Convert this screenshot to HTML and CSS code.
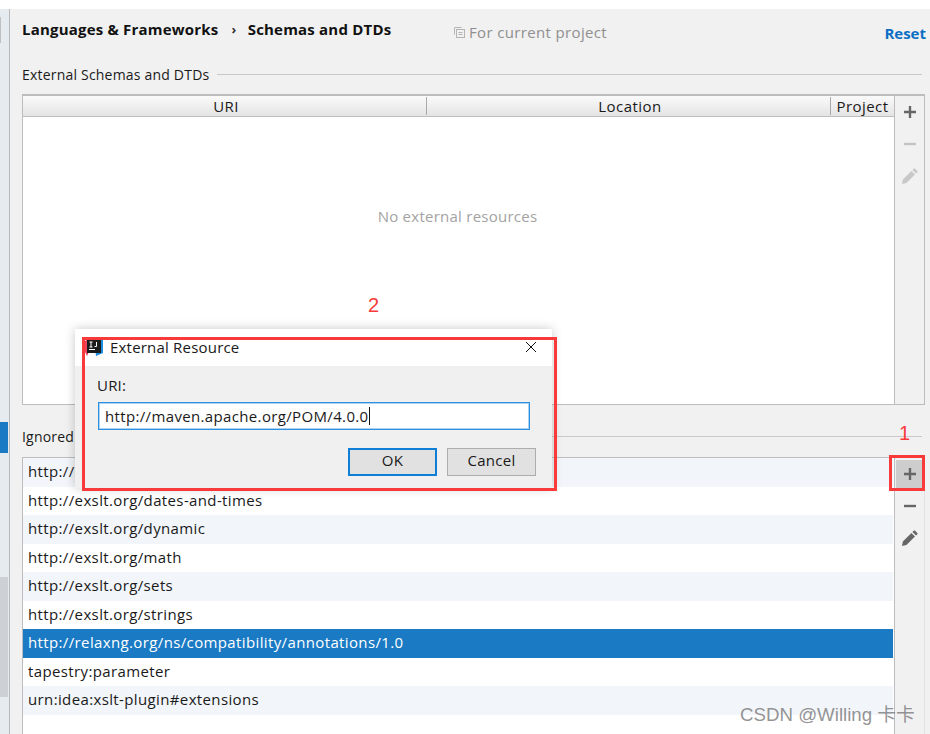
FILE: index.html
```html
<!DOCTYPE html>
<html>
<head>
<meta charset="UTF-8">
<title>Schemas and DTDs</title>
<link rel="stylesheet" href="styles.css">
</head>
<body>
<div class="page">
<div class="sidebar">
<div class="side-tab"></div>
<div class="side-selected"></div>
<div class="side-scroll"></div>
</div>
<div class="main">
<div class="header">
<span class="crumb">Languages &amp; Frameworks</span>
<span class="crumb-sep">›</span>
<span class="crumb">Schemas and DTDs</span>
<span class="scope">
<svg width="12" height="12" viewBox="0 0 12 12" fill="none" stroke="#b5b5b5"><path d="M1.5 8.5v-7h7"/><rect x="3.5" y="3.5" width="8" height="8"/><path d="M5.5 6.5h4M5.5 8.5h4"/></svg>
For current project
</span>
<a class="reset">Reset</a>
</div>
<div class="section-title"><span>External Schemas and DTDs</span><i></i></div>
<div class="panel panel-top">
<div class="table">
<div class="thead">
<div class="th th-uri">URI</div>
<div class="th th-loc">Location</div>
<div class="th th-proj">Project</div>
</div>
<div class="empty">No external resources</div>
</div>
<div class="tools">
<button class="tool"><svg width="16" height="16" viewBox="0 0 16 16"><path d="M8 2v12M2 8h12" stroke="#666" stroke-width="2.4"/></svg></button>
<button class="tool"><svg width="16" height="16" viewBox="0 0 16 16"><path d="M2 8h12" stroke="#c4c4c4" stroke-width="2.4"/></svg></button>
<button class="tool"><svg width="18" height="18" viewBox="0 0 18 18" fill="#c8c8c8"><path d="M1 17l.9-4.4L10.4 4l3.6 3.6-8.6 8.5z"/><path d="M11.4 3l1.3-1.3a1 1 0 011.4 0l2.2 2.2a1 1 0 010 1.4L15 6.6z"/></svg></button>
</div>
</div>
<div class="section-title section-ignored"><span>Ignored</span><i></i></div>
<div class="panel panel-bottom">
<div class="list">
<div class="row alt">http://exslt.org/common</div>
<div class="row">http://exslt.org/dates-and-times</div>
<div class="row alt">http://exslt.org/dynamic</div>
<div class="row">http://exslt.org/math</div>
<div class="row alt">http://exslt.org/sets</div>
<div class="row">http://exslt.org/strings</div>
<div class="row selected">http://relaxng.org/ns/compatibility/annotations/1.0</div>
<div class="row">tapestry:parameter</div>
<div class="row alt">urn:idea:xslt-plugin#extensions</div>
</div>
<div class="tools tools-low">
<button class="tool hover"><svg width="16" height="16" viewBox="0 0 16 16"><path d="M8 2v12M2 8h12" stroke="#666" stroke-width="2.4"/></svg></button>
<button class="tool"><svg width="16" height="16" viewBox="0 0 16 16"><path d="M2 8h12" stroke="#666" stroke-width="2.4"/></svg></button>
<button class="tool"><svg width="18" height="18" viewBox="0 0 18 18" fill="#666"><path d="M1 17l.9-4.4L10.4 4l3.6 3.6-8.6 8.5z"/><path d="M11.4 3l1.3-1.3a1 1 0 011.4 0l2.2 2.2a1 1 0 010 1.4L15 6.6z"/></svg></button>
</div>
</div>
</div>

<div class="dialog">
<div class="dialog-title">
<svg class="logo" width="18" height="18" viewBox="0 0 18 18"><path d="M0 3l5-3 4 2-7 16-2-4z" fill="#f0405f"/><path d="M9 0l9 2v13l-7 3z" fill="#1a8fe0"/><rect x="2" y="1" width="14" height="14" fill="#1c1c1c"/><rect x="4" y="11" width="6" height="1" fill="#fff"/><path d="M4.5 4h3M6 4v5M4.5 9h3M11.5 4v4.5h-2" stroke="#fff" fill="none"/></svg>
<span>External Resource</span>
<svg class="close" width="12" height="12" viewBox="0 0 12 12"><path d="M1 1l10 10M11 1L1 11" stroke="#111" stroke-width="1"/></svg>
</div>
<div class="dialog-body">
<label class="uri-label">URI:</label>
<div class="uri-input"><span>http://maven.apache.org/POM/4.0.0</span><i></i></div>
<div class="dialog-buttons">
<button class="btn btn-ok">OK</button>
<button class="btn">Cancel</button>
</div>
</div>
</div>

<div class="mark mark-dialog"></div>
<div class="mark mark-plus"></div>
<div class="note note-1">1</div>
<div class="note note-2">2</div>
<div class="watermark">CSDN @Willing 卡卡</div>
</div>
</body>
</html>
```
FILE: styles.css
```css
body{margin:0;background:#fff;font-family:"Open Sans","Noto Sans",sans-serif;font-size:15px;letter-spacing:.45px;color:#1a1a1a;}
.page{position:relative;display:flex;width:930px;height:734px;padding-top:9px;box-sizing:border-box;overflow:hidden;}
.sidebar{position:relative;width:9px;background:#e6ebf0;border-right:1px solid #b9b9b9;flex-shrink:0;}
.side-tab{position:absolute;left:0;top:8px;width:1px;height:26px;background:#c0c0c0;}
.side-selected{position:absolute;left:0;top:413px;width:8px;height:31px;background:#1a7ac4;}
.side-scroll{position:absolute;left:0;top:568px;width:8px;height:120px;background:#cdd1d6;}
.main{flex:1;background:#f1f1f1;padding:0 5px 0 12px;min-width:0;}

.header{display:flex;align-items:center;height:42px;position:relative;margin-top:-1px;}
.crumb{font-weight:700;letter-spacing:.2px;color:#111;}
.crumb-sep{margin:0 11px 0 13px;font-size:13px;font-weight:700;color:#333;}
.scope{position:absolute;left:431px;top:14px;display:flex;align-items:center;gap:4px;color:#8f8f8f;letter-spacing:.35px;}
.reset{position:absolute;right:-1px;top:15px;color:#0b6fc4;font-weight:700;letter-spacing:0;}

.section-title{display:flex;align-items:center;gap:8px;height:28px;margin-top:10px;font-size:14px;letter-spacing:.2px;}
.section-title span{white-space:nowrap;}
.section-title i{flex:1;height:1px;background:#c9c9c9;margin-right:3px;}
.section-ignored{height:24px;margin-top:19px;margin-bottom:9px;}

.panel{display:flex;}
.panel-top{height:311px;margin-top:6px;box-sizing:border-box;border:1px solid #bdbdbd;border-top-width:2px;}
.panel-bottom{height:277px;}
.table{flex:1;border-right:1px solid #bdbdbd;background:#fff;display:flex;flex-direction:column;}
.thead{display:flex;height:20px;background:linear-gradient(#fafafa,#e4e4e4);border-bottom:1px solid #bdbdbd;flex-shrink:0;}
.th{display:flex;align-items:center;justify-content:center;border-right:1px solid #a9a9a9;margin:1px 0;padding-left:3px;box-sizing:border-box;}
.th-uri{width:404px;}
.th-loc{width:404px;}
.th-proj{flex:1;border-right:0;padding-left:0;}
.empty{flex:1;display:flex;align-items:center;justify-content:center;color:#a3a3a3;letter-spacing:.25px;padding-right:2px;padding-bottom:89px;}

.tools{width:29px;display:flex;flex-direction:column;padding:2px 0 0 1px;gap:4px;flex-shrink:0;box-sizing:border-box;}
.tools-low{width:31px;padding-top:3px;border-left:1px solid #bdbdbd;border-right:1px solid #e2e2e2;}
.tool{width:27px;height:28px;margin:0;padding:0;border:0;background:none;display:flex;align-items:center;justify-content:center;}
.tool.hover{background:#cdcdcd;}

.list{flex:1;border-left:1px solid #bdbdbd;border-top:1px solid #bdbdbd;background:#fff;padding-right:1px;}
.row{height:28.5px;line-height:27.5px;padding-left:5px;background:#fff;white-space:nowrap;letter-spacing:.37px;}
.row.alt{background:#f2f5f9;}
.row.selected{background:#1a7ac4;color:#fff;}

.dialog{position:absolute;left:75px;top:329px;width:477px;height:159px;background:#f0f0f0;box-shadow:0 0 10px rgba(0,0,0,0.22);display:flex;flex-direction:column;}
.dialog-title{height:37px;background:#fff;display:flex;align-items:center;padding:0 0 1px 10px;box-sizing:border-box;flex-shrink:0;}
.logo{margin-right:7px;}
.dialog-title span{flex:1;letter-spacing:.2px;}
.close{margin-right:15px;}
.dialog-body{padding:10px 22px 0;position:relative;}
.uri-label{display:block;line-height:19px;letter-spacing:.2px;}
.uri-input{display:flex;align-items:center;width:432px;height:28px;margin-top:7px;margin-left:1px;box-sizing:border-box;background:#fff;border:1px solid #2d8fe0;box-shadow:inset 0 0 0 1px #a9d3f3;padding-left:6px;letter-spacing:.35px;}
.uri-input i{width:1px;height:18px;background:#111;}
.dialog-buttons{display:flex;justify-content:flex-end;gap:10px;margin-top:18px;width:439px;}
.btn{width:89px;height:28px;background:#e1e1e1;border:1px solid #adadad;font:15px "Open Sans","Noto Sans",sans-serif;letter-spacing:.3px;color:#1a1a1a;padding:0 0 5px;}
.btn-ok{border:2px solid #0f7fd6;}

.mark{position:absolute;border:3px solid #f83a3a;box-sizing:border-box;}
.mark-dialog{left:82px;top:337px;width:475px;height:154px;}
.mark-plus{left:889px;top:455px;width:36px;height:36px;}
.note{position:absolute;color:#f83a3a;font-size:20px;line-height:24px;letter-spacing:0;font-family:"Liberation Sans",sans-serif;}
.note-1{left:899px;top:421px;}
.note-2{left:368px;top:293px;}
.watermark{position:absolute;left:740px;top:699px;font-family:"Liberation Sans","Noto Sans CJK SC",sans-serif;font-size:18.7px;letter-spacing:0;color:rgba(120,120,120,0.8);white-space:nowrap;}
```
